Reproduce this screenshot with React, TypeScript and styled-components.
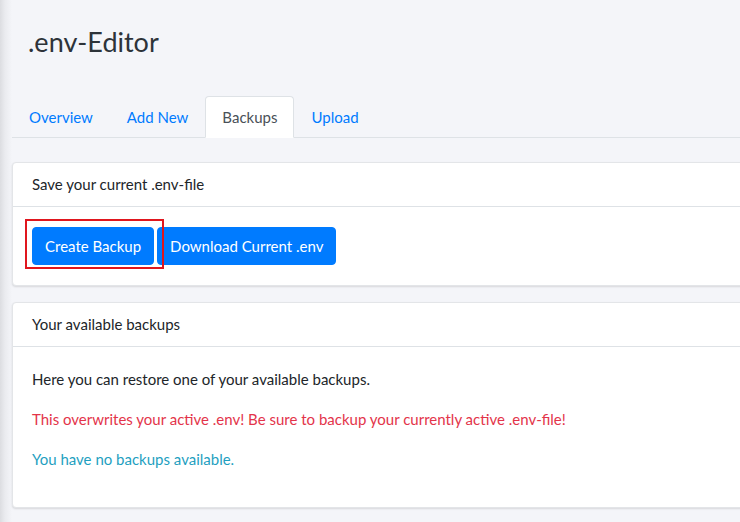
import React from "react";
import styled, { createGlobalStyle } from "styled-components";

const Global = createGlobalStyle`
  html, body {
    margin: 0;
    padding: 0;
    overflow: hidden;
    background: #f4f5f9;
  }
  body {
    font-family: "Lato", "Noto Sans", sans-serif;
    font-size: 15px;
    line-height: 1.6;
    color: #212529;
  }
  * { box-sizing: border-box; }
`;

const Page = styled.div`
  min-height: 522px;
  width: 780px;
  padding: 0 0 0 12px;
  background: linear-gradient(to right, #dcdde1 0px, #eaebef 5px, #f4f5f9 12px);
`;

const Title = styled.h1`
  margin: 0;
  padding: 24px 0 0 16px;
  height: 96px;
  font-size: 27px;
  font-weight: 400;
  line-height: 36px;
  color: #2d3339;
`;

const Tabs = styled.ul`
  display: flex;
  list-style: none;
  margin: 0 0 24px 0;
  padding: 0;
  border-bottom: 1px solid #dee2e6;
`;

const Tab = styled.li<{ $active?: boolean }>`
  margin-bottom: -1px;
  padding: 8px 16px;
  line-height: 24px;
  border: 1px solid ${(p) => (p.$active ? "#dee2e6" : "transparent")};
  border-bottom-color: ${(p) => (p.$active ? "#fff" : "transparent")};
  border-radius: 4px 4px 0 0;
  background: ${(p) => (p.$active ? "#fff" : "transparent")};
  color: ${(p) => (p.$active ? "#495057" : "#007bff")};
`;

const Card = styled.section`
  background: #fff;
  border: 1px solid #e3e5e8;
  border-radius: 4px;
  box-shadow: 0 1px 2px rgba(0, 0, 0, 0.12);
  margin-bottom: 16px;
`;

const CardHeader = styled.div`
  padding: 9px 19px 10px;
  line-height: 24px;
  border-bottom: 1px solid #dee2e6;
  color: #212529;
`;

const CardBody = styled.div`
  padding: 20px 19px;
`;

const ButtonRow = styled.div`
  display: flex;
  gap: 3px;
`;

const Highlight = styled.span`
  position: relative;
  display: inline-flex;
  &::after {
    content: "";
    position: absolute;
    top: -8px;
    left: -7px;
    right: -10px;
    bottom: -4px;
    border: 2px solid #e0161e;
    pointer-events: none;
  }
`;

const Button = styled.button`
  font-family: inherit;
  font-size: 15px;
  line-height: 24px;
  height: 38px;
  padding: 6px 12px;
  border: 1px solid #007bff;
  border-radius: 4px;
  background: #007bff;
  color: #fff;
  cursor: pointer;
`;

const Text = styled.p<{ $tone?: "danger" | "info" }>`
  margin: 0 0 16px 0;
  line-height: 24px;
  color: ${(p) =>
    p.$tone === "danger" ? "#e3344a" : p.$tone === "info" ? "#1f9fbf" : "#212529"};
`;

export default function App() {
  return (
    <>
      <Global />
      <Page>
        <Title>.env-Editor</Title>
        <Tabs>
          <Tab>Overview</Tab>
          <Tab>Add New</Tab>
          <Tab $active>Backups</Tab>
          <Tab>Upload</Tab>
        </Tabs>
        <Card>
          <CardHeader>Save your current .env-file</CardHeader>
          <CardBody>
            <ButtonRow>
              <Highlight>
                <Button>Create Backup</Button>
              </Highlight>
              <Button>Download Current .env</Button>
            </ButtonRow>
          </CardBody>
        </Card>
        <Card>
          <CardHeader>Your available backups</CardHeader>
          <CardBody>
            <Text>Here you can restore one of your available backups.</Text>
            <Text $tone="danger">
              This overwrites your active .env! Be sure to backup your currently active .env-file!
            </Text>
            <Text $tone="info">You have no backups available.</Text>
          </CardBody>
        </Card>
      </Page>
    </>
  );
}
